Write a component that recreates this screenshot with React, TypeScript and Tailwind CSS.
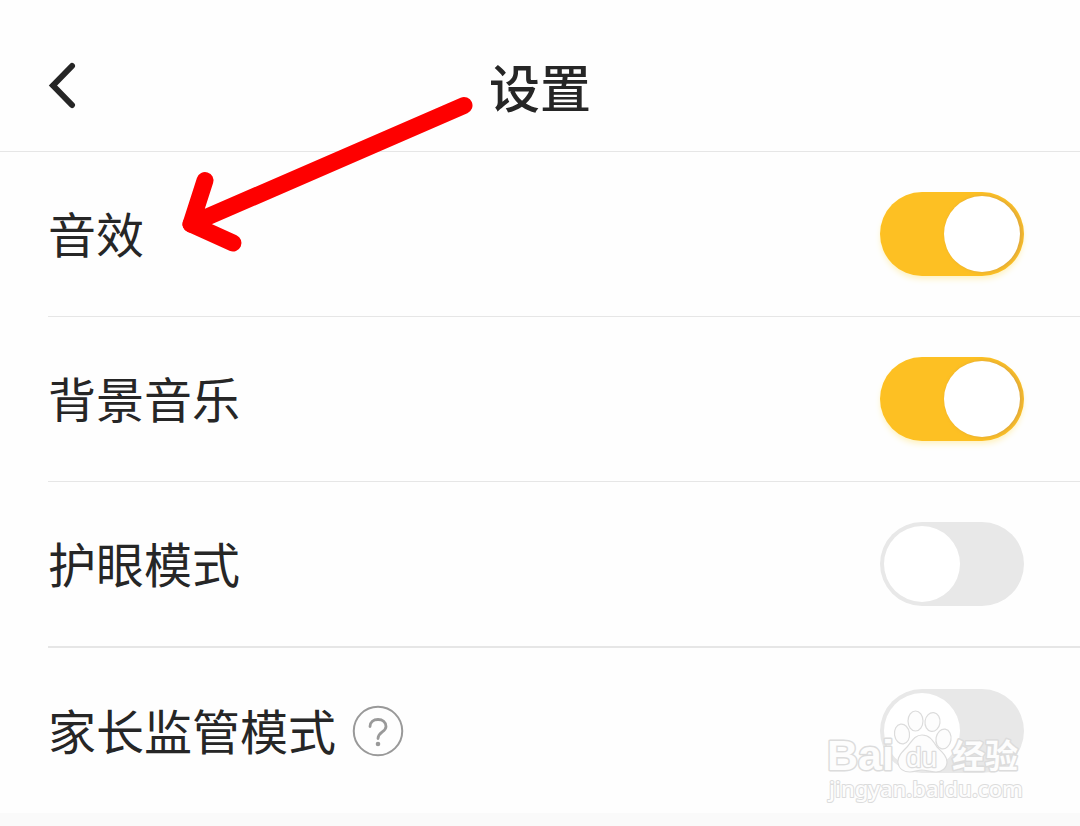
import React from 'react';

const settings = [
    {
        id: "sound",
        name: "音效",
        on: true,
        help: false
    },
    {
        id: "music",
        name: "背景音乐",
        on: true,
        help: false
    },
    {
        id: "eyecare",
        name: "护眼模式",
        on: false,
        help: false
    },
    {
        id: "parent",
        name: "家长监管模式",
        on: false,
        help: true
    }
];

const Switch = ({ id, on }: { id: string; on: boolean }) => {
    return (
        <input
            id={id}
            type='checkbox'
            role='switch'
            defaultChecked={on}
            className="flex h-21 w-36 shrink-0 cursor-pointer appearance-none items-center overflow-hidden rounded-full bg-[#e8e8e8] px-1 duration-300 before:size-19 before:rounded-full before:bg-white before:content-[''] checked:justify-end checked:bg-[#fdc023] checked:shadow-md checked:shadow-amber-100 checked:before:shadow-[2px_0_4px_#d9a441]"
        />
    );
};

const Arrow = () => {
    return (
        <svg viewBox='0 0 300 170' className='pointer-events-none absolute left-45 top-22 h-[170px] w-[300px]' fill='none' stroke='#fe0000' strokeWidth='17' strokeLinecap='round' strokeLinejoin='round' aria-hidden='true'>
            <path d='M284 17.500 L11 136' />
            <path d='M25 92.500 L11 136 L53 155' />
            <path d='M24 120 L34 132 L22 136 Z' fill='#fe0000' stroke='none' />
        </svg>
    );
};

const Watermark = () => {
    return (
        <svg viewBox='0 0 200 100' className='pointer-events-none absolute bottom-5 right-14 h-[100px] w-[200px]' fill='#fdfdfd' stroke='#dcdcdc' strokeWidth='1'>
            <g strokeWidth='1.200'>
                <ellipse cx='78' cy='28' rx='7.500' ry='10' transform='rotate(-8 78 28)' />
                <ellipse cx='91.500' cy='15' rx='7.500' ry='10' />
                <ellipse cx='108.500' cy='16' rx='7.500' ry='9.500' transform='rotate(8 108.500 16)' />
                <ellipse cx='119.500' cy='33' rx='7.500' ry='10' transform='rotate(10 119.500 33)' />
                <path d='M98 29 C91 29 88 35 83 41 C78 46 73 51 74 57 C75 63 80 66 86 66 C91 66 94 64 98 64 C102 64 106 66 112 66 C118 66 123 62 123 56 C123 50 118 46 113 41 C109 35 106 29 98 29 Z' />
            </g>
            <g fontFamily='"Liberation Sans", "Noto Sans CJK SC", sans-serif' paintOrder='stroke' strokeWidth='3' strokeLinejoin='round'>
                <text x='3' y='64' fontSize='43' fontWeight='700'>Bai</text>
                <text x='82' y='61' fontSize='28' strokeWidth='2.500'>du</text>
                <text x='128' y='62' fontSize='33' fontWeight='700'>经验</text>
                <text x='5' y='91' fontFamily='"Noto Sans", sans-serif' fontSize='22' fontWeight='500' strokeWidth='2'>jingyan.baidu.com</text>
            </g>
        </svg>
    );
};

const App = () => {
    return (
        <div className='relative min-h-screen overflow-hidden bg-[#fafafa] font-["Noto_Sans_CJK_SC",sans-serif] text-[#262626]'>
            <header className='grid h-38 grid-cols-[1fr_auto_1fr] items-center border-b border-[#e6e6e6] bg-[#fefefe] px-12 pt-5'>
                <button type='button' aria-label='返回' className='w-8 cursor-pointer'>
                    <svg viewBox='0 0 32 48' className='h-12 w-8' fill='none' stroke='#262626' strokeWidth='6' strokeLinecap='round' strokeLinejoin='miter'>
                        <path d='M24 4 L5 23.500 L24 43' />
                    </svg>
                </button>
                <h1 className='text-[51px] font-medium leading-16'>设置</h1>
            </header>
            <ul className='bg-[#fefefe] pl-12'>
                {
                    settings?.map(item => {
                        return <li key={item?.id} className='flex items-center justify-between border-b border-[#e6e6e6] py-10 pr-14 nth-3:border-b-2 last:border-b-0 last:pt-[41px]'>
                            <div className='flex items-center gap-4'>
                                <label htmlFor={item?.id} className='pb-1 text-5xl'>{item?.name}</label>
                                {item?.help && (
                                    <button type='button' aria-label='帮助' className='cursor-pointer'>
                                        <svg viewBox='0 0 52 52' className='size-13' fill='none' stroke='#999999' strokeWidth='2' strokeLinecap='round'>
                                            <circle cx='26' cy='26' r='24.250' />
                                            <path strokeWidth='2.800' d='M18 21.500 C18 17 21.500 14.500 26 14.500 C30.500 14.500 34 17 34 21.500 C34 27 26 27 26 33.500' />
                                            <circle cx='26' cy='39' r='2.300' fill='#999999' stroke='none' />
                                        </svg>
                                    </button>
                                )}
                            </div>
                            <Switch id={item?.id} on={item?.on} />
                        </li>;
                    })
                }
            </ul>
            <Arrow />
            <Watermark />
        </div>
    );
};

export default App;
